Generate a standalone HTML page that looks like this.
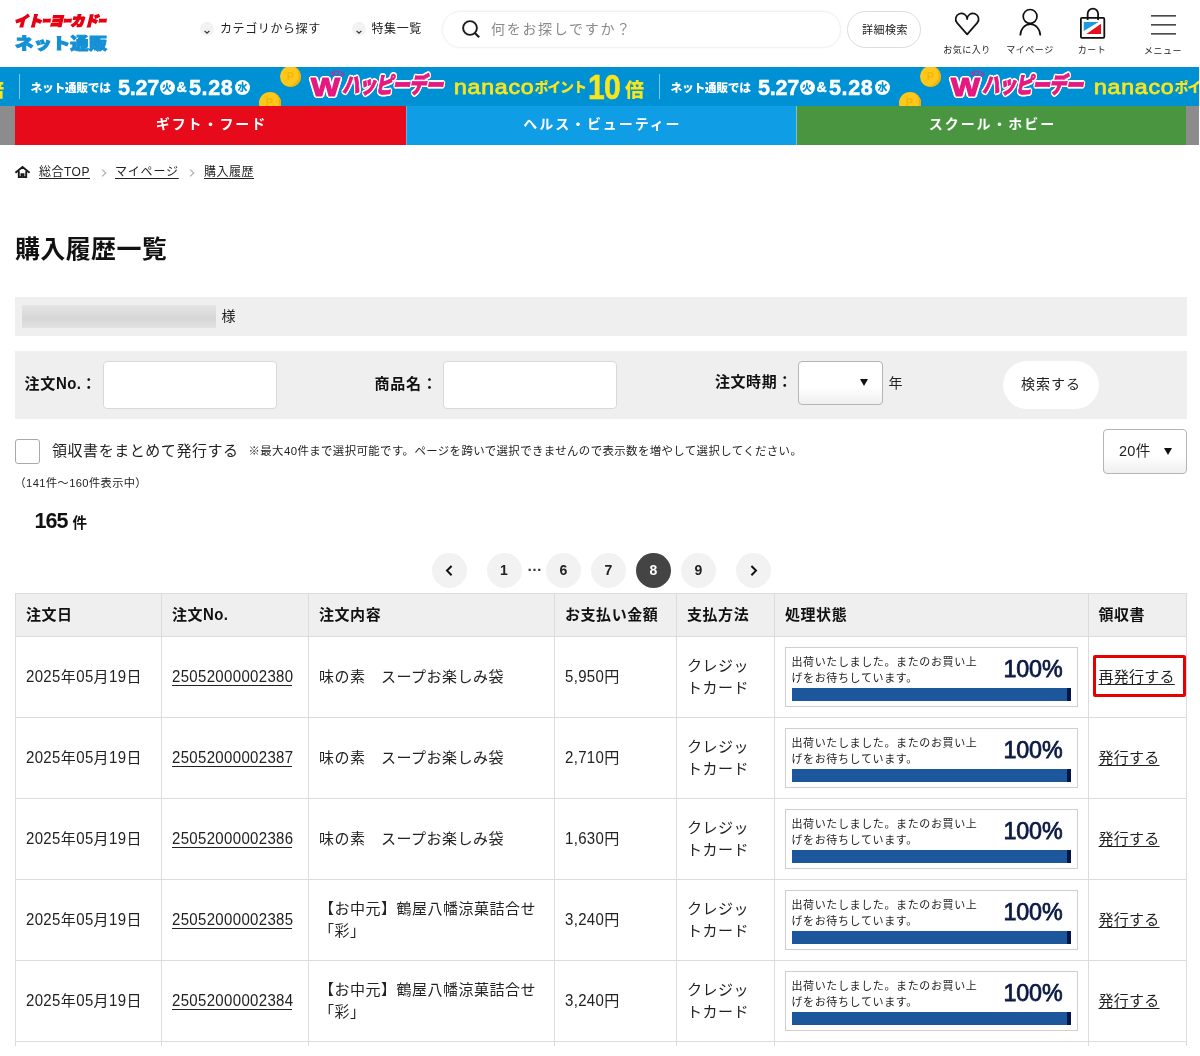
<!DOCTYPE html>
<html lang="ja">
<head>
<meta charset="utf-8">
<title>購入履歴一覧</title>
<style>
*{box-sizing:border-box;margin:0;padding:0}
html,body{width:1200px;height:1056px;background:#fff;overflow:hidden}
body{font-family:"Liberation Sans","Noto Sans CJK JP",sans-serif;color:#222;font-size:15px;letter-spacing:.5px;line-height:1.5;position:relative}
#page{position:absolute;left:0;top:0;width:1199px;height:1046px;overflow:hidden;will-change:transform}
.abs{position:absolute;white-space:nowrap}
a{color:#222;text-decoration:underline;text-underline-offset:2px}

/* header */
.logo1{left:14px;top:7.5px;font-weight:900;font-style:italic;color:#e60012;font-size:14px;letter-spacing:-.35px;line-height:26px;-webkit-text-stroke:1.35px #e60012}
.logo1 span{display:inline-block;transform:scaleX(.6);margin:0 -3.2px 0 -2.8px}
.logo2{left:14.5px;top:29.5px;font-weight:900;color:#1590d5;font-size:15.8px;letter-spacing:.1px;line-height:28px;-webkit-text-stroke:1px #1590d5;transform:scaleX(1.16);transform-origin:0 50%}
.hnav{font-size:12px;letter-spacing:.6px;line-height:18px;color:#222}
.chev{position:absolute;width:14px;height:14px;border-radius:50%;background:#f2f2f2}
.search{position:absolute;left:442px;top:11px;width:399px;height:37px;border-radius:19px;border:1px solid #f1f1f1;box-shadow:0 0 3px rgba(0,0,0,.05);background:#fff}
.ph{left:491px;top:18px;font-size:14px;letter-spacing:1.7px;line-height:22px;color:#8a8a8a}
.detail{position:absolute;left:847px;top:11px;width:74px;height:37px;border-radius:19px;border:1px solid #dcdcdc;background:#fff;font-size:11px;letter-spacing:.5px;line-height:37px;text-align:center;text-indent:2px;color:#222}
.ilabel{font-size:9px;letter-spacing:.5px;line-height:12px;color:#222;text-align:center}

/* banner */
.banner{position:absolute;left:0;top:67px;width:1199px;height:39px;background:#0090d4;overflow:hidden}
.tile{position:absolute;top:0;width:640px;height:39px}
.tile span,.tile i,.tile b{position:absolute;white-space:nowrap;font-style:normal}
.sep{left:0;top:7px;width:1px;height:25px;background:rgba(255,255,255,.5)}
.b-net{left:12px;top:12.5px;font-size:11.8px;font-weight:900;color:#fff;letter-spacing:-.35px;line-height:16px}
.b-date{top:6.5px;font-size:21.5px;font-weight:700;color:#fff;letter-spacing:-.2px;line-height:29px;-webkit-text-stroke:.5px #fff}
.b-day{top:12.5px;width:15px;height:15px;border-radius:50%;background:#fff;color:#0090d4;font-size:10px;font-weight:900;line-height:15px;text-align:center;letter-spacing:0}
.b-amp{left:158px;top:10.5px;font-size:14px;-webkit-text-stroke:.4px #fff;font-weight:700;color:#fff;line-height:18px;letter-spacing:0}
.coin{border-radius:50%;background:#fdc71c;box-shadow:inset -2px -1px 0 #f3b000;color:#f7b500;font-weight:700;font-size:11px;text-align:center;letter-spacing:0}
.b-w{left:323px;top:3px;font-size:22.5px;font-weight:900;color:#e5197f;letter-spacing:-.9px;line-height:32px;font-style:italic!important;-webkit-text-stroke:.9px #e5197f;text-shadow:-1.9px 0px 0 #fff,1.9px 0px 0 #fff,0px -1.7px 0 #fff,0px 1.7px 0 #fff,-1.4px -1.3px 0 #fff,1.4px -1.3px 0 #fff,-1.4px 1.3px 0 #fff,1.4px 1.3px 0 #fff,-1.8px -0.8px 0 #fff,1.8px -0.8px 0 #fff,-1.8px 0.8px 0 #fff,1.8px 0.8px 0 #fff,-0.8px -1.6px 0 #fff,0.8px -1.6px 0 #fff,-0.8px 1.6px 0 #fff,0.8px 1.6px 0 #fff;transform:scaleX(.775);transform-origin:0 50%}
.b-ww{left:292.5px;top:3.5px;font-size:25.5px;font-weight:700;color:#e5197f;line-height:32px;letter-spacing:0;-webkit-text-stroke:1.2px #e5197f;text-shadow:-1.9px 0px 0 #fff,1.9px 0px 0 #fff,0px -1.7px 0 #fff,0px 1.7px 0 #fff,-1.4px -1.3px 0 #fff,1.4px -1.3px 0 #fff,-1.4px 1.3px 0 #fff,1.4px 1.3px 0 #fff,-1.8px -0.8px 0 #fff,1.8px -0.8px 0 #fff,-1.8px 0.8px 0 #fff,1.8px 0.8px 0 #fff,-0.8px -1.6px 0 #fff,0.8px -1.6px 0 #fff,-0.8px 1.6px 0 #fff,0.8px 1.6px 0 #fff;transform:scaleX(1.2);transform-origin:0 50%}
.b-rb{left:312px;top:2.5px;font-size:5px;font-weight:900;color:#e5197f;line-height:7px;letter-spacing:-.3px}
.b-w2{-webkit-text-stroke:0 transparent}
.b-nanaco{left:435.5px;top:3px;font-size:21px;font-weight:400;color:#f5e61e;letter-spacing:.7px;line-height:33px;-webkit-text-stroke:.8px #f5e61e;transform:scaleX(1.1);transform-origin:0 50%}
.b-point{left:516px;top:10px;font-size:14px;font-weight:900;color:#f5e61e;letter-spacing:-1.2px;line-height:20px}
.b-10{left:569px;top:-4px;font-size:35px;font-weight:700;color:#f5e61e;-webkit-text-stroke:.6px #f5e61e;letter-spacing:-1px;line-height:48px;transform:scaleX(.86);transform-origin:0 50%}
.b-bai{left:606.5px;top:9.5px;font-size:19px;font-weight:900;color:#f5e61e;line-height:27px;letter-spacing:0}

/* category nav */
.cnav{position:absolute;left:0;top:106px;width:1199px;height:39px;background:#8c8c8c}
.cnav div{position:absolute;top:0;height:39px;color:#fff;font-weight:700;font-size:14px;letter-spacing:1.9px;line-height:37.5px;text-align:center;text-indent:1.9px}

/* breadcrumb */
.bc{font-size:12px;letter-spacing:.5px;line-height:18px}
.bcsep{color:#aaa;font-size:11px;line-height:18px;letter-spacing:0}
h1{position:absolute;left:15px;top:228.5px;font-size:25px;font-weight:700;letter-spacing:.35px;line-height:40px;white-space:nowrap;color:#111}

.namebar{position:absolute;left:15px;top:297px;width:1171.5px;height:38.5px;background:#efefef}
.blur{position:absolute;left:6.6px;top:8px;width:194.4px;height:22.6px;background:linear-gradient(#e5e5e5 0%,#dcdcdc 35%,#d6d6d6 58%,#dedede 85%,#e2e2e2 100%)}
.sbar{position:absolute;left:15px;top:351px;width:1171.5px;height:67.5px;background:#efefef}
.lbl{font-weight:700;font-size:15px;letter-spacing:.8px;line-height:22px;color:#111}
.inp{position:absolute;top:361px;height:47.5px;background:#fff;border:1px solid #d9d9d9;border-radius:4px}
.sel{position:absolute;background:linear-gradient(#fff 60%,#efefef);border:1px solid #b5b5b5;border-radius:4px}
.tri{position:absolute;width:0;height:0;border-left:4px solid transparent;border-right:4px solid transparent;border-top:7px solid #111}
.sbtn{position:absolute;left:1002.5px;top:361px;width:96px;height:47.5px;border-radius:24px;background:#fff;font-size:14px;letter-spacing:1px;line-height:47px;text-align:center;text-indent:1px;color:#222}
.cb{position:absolute;left:15px;top:438.5px;width:25px;height:25px;border:1px solid #a9a9a9;border-radius:3px;background:#fff}

/* pager */
.pg{position:absolute;top:553px;width:35px;height:35px;border-radius:50%;background:#f2f2f2;font-size:14px;font-weight:700;line-height:35.5px;text-align:center;color:#222;letter-spacing:0}
.pg.on{background:#444;color:#fff}

/* table */
table{position:absolute;left:15px;top:593px;width:1172px;border-collapse:collapse;table-layout:fixed}
th,td{border:1px solid #dcdcdc;padding:0 10px;text-align:left;vertical-align:middle;font-weight:400}
th{height:43px;background:#efefef;font-weight:700;font-size:15px;letter-spacing:.55px;color:#111}
td{height:81px;font-size:15px;letter-spacing:.5px;line-height:22.5px;color:#222}
.st{position:relative;width:293px;height:60.5px;border:1px solid #cfcfcf;background:#fff;margin-left:0}
.st p{position:absolute;left:5.5px;top:7.5px;font-size:11px;letter-spacing:.62px;line-height:15.6px;color:#222;white-space:nowrap}
.st b{position:absolute;right:14.5px;top:4px;font-size:23.3px;font-weight:400;letter-spacing:-.15px;line-height:34px;color:#0b1a45;-webkit-text-stroke:.75px #0b1a45}
.st i{position:absolute;left:5.8px;top:40px;width:279.5px;height:13.2px;background:#1b579a;border-right:4px solid #071446}
.redbox{position:absolute;left:1092.5px;top:655px;width:93px;height:42px;border:3px solid #e60000;border-radius:2px}
.d{display:inline-block;transform:scaleY(1.16);transform-origin:0 16.4px;letter-spacing:.33px}
td a.n{display:inline-block;position:relative;text-decoration:none}
td a.n:after{content:"";position:absolute;left:0;right:1px;top:19px;height:1px;background:#222}
td a{letter-spacing:.25px}
</style>
</head>
<body>
<div id="page">

<!-- HEADER -->
<div class="abs logo1">イト<span>ー</span>ヨ<span>ー</span>カド<span>ー</span></div>
<div class="abs logo2">ネット通販</div>

<div class="chev" style="left:200px;top:22px"><svg width="14" height="14" viewBox="0 0 14 14"><path d="M4.6 6.9 L7 9.2 L9.4 6.9" fill="none" stroke="#333" stroke-width="1.3"/></svg></div>
<div class="abs hnav" style="left:220px;top:19.5px">カテゴリから探す</div>
<div class="chev" style="left:352px;top:22px"><svg width="14" height="14" viewBox="0 0 14 14"><path d="M4.6 6.9 L7 9.2 L9.4 6.9" fill="none" stroke="#333" stroke-width="1.3"/></svg></div>
<div class="abs hnav" style="left:371.5px;top:19.5px">特集一覧</div>

<div class="search"></div>
<svg class="abs" style="left:461px;top:20px" width="20" height="20" viewBox="0 0 20 20"><circle cx="9" cy="8" r="6.9" fill="none" stroke="#1c1c1c" stroke-width="1.9"/><path d="M13.8 12.9 L18.2 17.3" stroke="#1c1c1c" stroke-width="2.1" stroke-linecap="butt"/></svg>
<div class="abs ph">何をお探しですか？</div>
<div class="detail">詳細検索</div>

<svg class="abs" style="left:953px;top:11px" width="28" height="26" viewBox="0 0 28 26"><path d="M14.15 8.1 A5.75 5.75 0 1 0 4.07 11.89 L14.15 23.4 L24.23 11.89 A5.75 5.75 0 1 0 14.15 8.1 Z" fill="none" stroke="#111" stroke-width="1.7" stroke-linejoin="round"/></svg>
<div class="abs ilabel" style="left:937px;top:43.5px;width:60px">お気に入り</div>

<svg class="abs" style="left:1017px;top:7px" width="27" height="30" viewBox="0 0 27 30"><circle cx="13.1" cy="9.4" r="6.9" fill="none" stroke="#111" stroke-width="1.7"/><path d="M3.3 28.5 A10 11.4 0 0 1 23.3 28.5" fill="none" stroke="#111" stroke-width="1.7"/></svg>
<div class="abs ilabel" style="left:1000px;top:43.5px;width:60px">マイページ</div>

<svg class="abs" style="left:1079px;top:6px" width="28" height="34" viewBox="0 0 28 34"><rect x="1.9" y="11.9" width="23.4" height="19.95" rx="1" fill="#fff" stroke="#111" stroke-width="1.8"/><path d="M8.65 13.9 V7.9 A5.22 5.22 0 0 1 19.1 7.9 V13.9" fill="none" stroke="#111" stroke-width="1.8"/><path d="M4.75 16 H19.6 L4.75 24.9 Z" fill="#1a9be0"/><path d="M22 17.7 V28 H7.4 Z" fill="#e60f1e"/></svg>
<div class="abs ilabel" style="left:1062px;top:43.5px;width:60px">カート</div>

<svg class="abs" style="left:1150px;top:14px" width="27" height="22" viewBox="0 0 27 22"><path d="M1 1.8 H26 M1 10.8 H26 M1 19.8 H26" stroke="#111" stroke-width="1.3"/></svg>
<div class="abs ilabel" style="left:1133px;top:44.5px;width:60px">メニュー</div>

<!-- BANNER -->
<div class="banner">
<div class="tile" style="left:-621.5px"><i class="sep"></i><span class="b-net">ネット通販では</span><span class="b-date" style="left:99.5px">5.27</span><b class="b-day" style="left:141px">火</b><span class="b-amp">&amp;</span><span class="b-date" style="left:170.5px;letter-spacing:.6px">5.28</span><b class="b-day" style="left:216.5px">水</b><b class="coin" style="left:261.5px;top:-1px;width:21px;height:21px;line-height:21px">P</b><b class="coin" style="left:240px;top:25px;width:22px;height:22px;line-height:20px">P</b><span class="b-rb">ダブル</span><span class="b-ww">W</span><span class="b-w">ハッピーデー</span><span class="b-nanaco">nanaco</span><span class="b-point">ポイント</span><span class="b-10">10</span><span class="b-bai">倍</span></div>
<div class="tile" style="left:18.5px"><i class="sep"></i><span class="b-net">ネット通販では</span><span class="b-date" style="left:99.5px">5.27</span><b class="b-day" style="left:141px">火</b><span class="b-amp">&amp;</span><span class="b-date" style="left:170.5px;letter-spacing:.6px">5.28</span><b class="b-day" style="left:216.5px">水</b><b class="coin" style="left:261.5px;top:-1px;width:21px;height:21px;line-height:21px">P</b><b class="coin" style="left:240px;top:25px;width:22px;height:22px;line-height:20px">P</b><span class="b-rb">ダブル</span><span class="b-ww">W</span><span class="b-w">ハッピーデー</span><span class="b-nanaco">nanaco</span><span class="b-point">ポイント</span><span class="b-10">10</span><span class="b-bai">倍</span></div>
<div class="tile" style="left:658.5px"><i class="sep"></i><span class="b-net">ネット通販では</span><span class="b-date" style="left:99.5px">5.27</span><b class="b-day" style="left:141px">火</b><span class="b-amp">&amp;</span><span class="b-date" style="left:170.5px;letter-spacing:.6px">5.28</span><b class="b-day" style="left:216.5px">水</b><b class="coin" style="left:261.5px;top:-1px;width:21px;height:21px;line-height:21px">P</b><b class="coin" style="left:240px;top:25px;width:22px;height:22px;line-height:20px">P</b><span class="b-rb">ダブル</span><span class="b-ww">W</span><span class="b-w">ハッピーデー</span><span class="b-nanaco">nanaco</span><span class="b-point">ポイント</span><span class="b-10">10</span><span class="b-bai">倍</span></div>
</div>

<!-- CATEGORY NAV -->
<div class="cnav">
<div style="left:15px;width:391px;background:#e60a1a">ギフト・フード</div>
<div style="left:406px;width:390px;background:#0f9de5;border-left:1px solid #5db6e8">ヘルス・ビューティー</div>
<div style="left:796px;width:390px;background:#4a9640;border-left:1px solid #7cc0c8">スクール・ホビー</div>
</div>

<!-- BREADCRUMB -->
<svg class="abs" style="left:14px;top:165px" width="18" height="14" viewBox="0 0 18 14"><path d="M1.4 7.8 L8.5 2 L15.6 7.8 M4.8 6.2 V12.1 H7.5 V9.3 H9.5 V12.1 H12.2 V6.2" fill="none" stroke="#1a1a1a" stroke-width="1.9" stroke-linejoin="miter"/></svg>
<a class="abs bc" style="left:39px;top:163px">総合TOP</a>
<svg class="abs" style="left:101px;top:167px" width="7" height="10" viewBox="0 0 7 10"><path d="M1.2 2.6 L4.8 6 L1.2 9.4" fill="none" stroke="#b0b0b0" stroke-width="1.2"/></svg>
<a class="abs bc" style="left:115px;top:163px;letter-spacing:.8px">マイページ</a>
<svg class="abs" style="left:189px;top:167px" width="7" height="10" viewBox="0 0 7 10"><path d="M1.2 2.6 L4.8 6 L1.2 9.4" fill="none" stroke="#b0b0b0" stroke-width="1.2"/></svg>
<a class="abs bc" style="left:204px;top:163px">購入履歴</a>

<h1>購入履歴一覧</h1>

<div class="namebar"><div class="blur"></div><div class="abs" style="left:206.5px;top:7.5px;font-size:14px;line-height:22px;letter-spacing:0">様</div></div>

<div class="sbar"></div>
<div class="abs lbl" style="left:24.5px;top:372.5px">注文<span class="d">No.</span>：</div>
<div class="inp" style="left:102.5px;width:174px"></div>
<div class="abs lbl" style="left:374.5px;top:372.5px">商品名：</div>
<div class="inp" style="left:442.5px;width:174px"></div>
<div class="abs lbl" style="left:715px;top:371px;letter-spacing:.55px">注文時期：</div>
<div class="sel" style="left:797.5px;top:360.5px;width:85.5px;height:44px"></div>
<div class="tri" style="left:860px;top:379px"></div>
<div class="abs" style="left:888.5px;top:371.5px;font-size:14px;line-height:22px;letter-spacing:0">年</div>
<div class="sbtn">検索する</div>

<div class="cb"></div>
<div class="abs" style="left:52px;top:439px;font-size:15px;letter-spacing:.55px;line-height:23px">領収書をまとめて発行する</div>
<div class="abs" style="left:248.5px;top:443px;font-size:11.4px;letter-spacing:.42px;line-height:17px">※最大40件まで選択可能です。ページを跨いで選択できませんので表示数を増やして選択してください。</div>
<div class="sel" style="left:1103px;top:429px;width:84px;height:44.5px"></div>
<div class="abs" style="left:1119px;top:439.5px;font-size:14.5px;letter-spacing:.3px;line-height:22px">20件</div>
<div class="tri" style="left:1164px;top:447.5px"></div>

<div class="abs" style="left:14.5px;top:475px;font-size:11.2px;letter-spacing:.4px;line-height:17px">（141件～160件表示中）</div>
<div class="abs" style="left:34.5px;top:505.5px;font-size:21.5px;font-weight:700;letter-spacing:-1px;line-height:30px;color:#111">165</div>
<div class="abs" style="left:72.5px;top:511.5px;font-size:14.5px;font-weight:700;letter-spacing:0;line-height:22px;color:#111">件</div>

<!-- PAGER -->
<div class="pg" style="left:431.5px"><svg width="35" height="35" viewBox="0 0 35 35"><path d="M19.6 13 L15 17.6 L19.6 22.2" fill="none" stroke="#111" stroke-width="2"/></svg></div>
<div class="pg" style="left:486.5px">1</div>
<div class="abs" style="left:527px;top:556.5px;font-size:15px;font-weight:700;line-height:18px;letter-spacing:0;color:#333">…</div>
<div class="pg" style="left:546px">6</div>
<div class="pg" style="left:591px">7</div>
<div class="pg on" style="left:636px">8</div>
<div class="pg" style="left:681px">9</div>
<div class="pg" style="left:736px"><svg width="35" height="35" viewBox="0 0 35 35"><path d="M15.4 13 L20 17.6 L15.4 22.2" fill="none" stroke="#111" stroke-width="2"/></svg></div>

<!-- TABLE -->
<table id="tbl">
<colgroup><col style="width:146px"><col style="width:147px"><col style="width:246px"><col style="width:122px"><col style="width:98px"><col style="width:313.5px"><col style="width:98.5px"></colgroup>
<tr><th>注文日</th><th>注文<span class="d">No.</span></th><th>注文内容</th><th>お支払い金額</th><th>支払方法</th><th>処理状態</th><th>領収書</th></tr>
<tr><td><span class="d">2025</span>年<span class="d">05</span>月<span class="d">19</span>日</td><td><a class="n"><span class="d">25052000002380</span></a></td><td class="nm">味の素　スープお楽しみ袋</td><td><span class="d">5,950</span>円</td><td>クレジッ<br>トカード</td><td><div class="st"><p>出荷いたしました。またのお買い上<br>げをお待ちしています。</p><b>100%</b><i></i></div></td><td><a>再発行する</a></td></tr>
<tr><td><span class="d">2025</span>年<span class="d">05</span>月<span class="d">19</span>日</td><td><a class="n"><span class="d">25052000002387</span></a></td><td class="nm">味の素　スープお楽しみ袋</td><td><span class="d">2,710</span>円</td><td>クレジッ<br>トカード</td><td><div class="st"><p>出荷いたしました。またのお買い上<br>げをお待ちしています。</p><b>100%</b><i></i></div></td><td><a>発行する</a></td></tr>
<tr><td><span class="d">2025</span>年<span class="d">05</span>月<span class="d">19</span>日</td><td><a class="n"><span class="d">25052000002386</span></a></td><td class="nm">味の素　スープお楽しみ袋</td><td><span class="d">1,630</span>円</td><td>クレジッ<br>トカード</td><td><div class="st"><p>出荷いたしました。またのお買い上<br>げをお待ちしています。</p><b>100%</b><i></i></div></td><td><a>発行する</a></td></tr>
<tr><td><span class="d">2025</span>年<span class="d">05</span>月<span class="d">19</span>日</td><td><a class="n"><span class="d">25052000002385</span></a></td><td class="nm">【お中元】鶴屋八幡涼菓詰合せ<br>「彩」</td><td><span class="d">3,240</span>円</td><td>クレジッ<br>トカード</td><td><div class="st"><p>出荷いたしました。またのお買い上<br>げをお待ちしています。</p><b>100%</b><i></i></div></td><td><a>発行する</a></td></tr>
<tr><td><span class="d">2025</span>年<span class="d">05</span>月<span class="d">19</span>日</td><td><a class="n"><span class="d">25052000002384</span></a></td><td class="nm">【お中元】鶴屋八幡涼菓詰合せ<br>「彩」</td><td><span class="d">3,240</span>円</td><td>クレジッ<br>トカード</td><td><div class="st"><p>出荷いたしました。またのお買い上<br>げをお待ちしています。</p><b>100%</b><i></i></div></td><td><a>発行する</a></td></tr>
<tr><td></td><td></td><td></td><td></td><td></td><td></td><td></td></tr>
</table>
<div class="redbox"></div>

</div>
</body>
</html>
